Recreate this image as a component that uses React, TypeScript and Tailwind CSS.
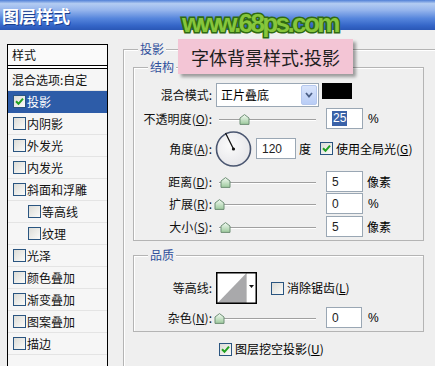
import React from 'react';

const cjk = "font-['Noto_Sans_CJK_SC','Noto_Sans',sans-serif]";

function Check({ checked = false }: { checked?: boolean }) {
  return (
    <span className="flex h-[13px] w-[13px] shrink-0 items-center justify-center border border-[#2a5580] bg-[linear-gradient(135deg,#dcdcd7,#fbfbf9)]">
      {checked && (
        <svg width="9" height="9" viewBox="0 0 9 9">
          <path d="M1 4.2 L3.5 6.8 L8 1.6" fill="none" stroke="#21a121" strokeWidth="2" />
        </svg>
      )}
    </span>
  );
}

function Key({ k }: { k: string }) {
  return (
    <>
      (<span className="underline">{k}</span>)
    </>
  );
}

function Slider({ pos }: { pos: number }) {
  return (
    <div className="relative ml-[2px] h-full w-[106px] shrink-0">
      <div className="absolute left-[5px] right-[4px] top-[50%] h-[2px] border-t border-b border-t-[#a0a0a0] border-b-white" />
      <svg
        className="absolute top-[calc(50%-5px)]"
        style={{ left: pos }}
        width="11"
        height="11"
        viewBox="0 0 11 11"
      >
        <defs>
          <linearGradient id="thumbG" x1="0" y1="0" x2="0" y2="1">
            <stop offset="0" stopColor="#f4fbf4" />
            <stop offset="1" stopColor="#9cc99c" />
          </linearGradient>
        </defs>
        <path d="M1 4 L5.5 0.6 L10 4 L10 10.4 L1 10.4 Z" fill="url(#thumbG)" stroke="#6f8f76" strokeWidth="1" />
      </svg>
    </div>
  );
}

function NumBox({ value, w = 'w-[37px]', selected = false }: { value: string; w?: string; selected?: boolean }) {
  return (
    <div className={`flex h-[21px] ${w} shrink-0 items-center border border-[#9aa7b4] bg-white pl-[5px] font-['Liberation_Sans',sans-serif] text-[12px] text-[#222]`}>
      {selected ? <span className="bg-[#3a62a8] px-[1px] leading-[15px] text-white">{value}</span> : value}
    </div>
  );
}

function Label({ children }: { children: React.ReactNode }) {
  return <div className="w-[78px] shrink-0 text-right text-[12px] leading-none text-[#111]">{children}</div>;
}

function Legend({ children }: { children: React.ReactNode }) {
  return (
    <span className="absolute left-[14px] top-[-9px] bg-[#efefef] px-[2px] text-[12px] leading-[16px] text-[#2f4f9c]">
      {children}
    </span>
  );
}

const listRows: { name: string; sub?: boolean; checked?: boolean; selected?: boolean }[] = [
  { name: '投影', checked: true, selected: true },
  { name: '内阴影' },
  { name: '外发光' },
  { name: '内发光' },
  { name: '斜面和浮雕' },
  { name: '等高线', sub: true },
  { name: '纹理', sub: true },
  { name: '光泽' },
  { name: '颜色叠加' },
  { name: '渐变叠加' },
  { name: '图案叠加' },
  { name: '描边' },
];

export default function App() {
  return (
    <div className={`relative h-[366px] w-[435px] overflow-hidden bg-[#efefef] ${cjk}`}>
      {/* Title bar */}
      <div className="flex h-[30px] items-center bg-[linear-gradient(180deg,#4f7fd6_0%,#b3ccf2_12%,#93b3ec_35%,#5585dc_62%,#3566c8_85%,#2a57b6_100%)] pl-[2px]">
        <span className="text-[17px] font-bold leading-none text-white [text-shadow:1px_1px_0_#1b3f8f]">图层样式</span>
      </div>

      <div className="flex">
        {/* Style list */}
        <div className="ml-[7px] mt-[14px] h-[340px] w-[101px] shrink-0 border border-black bg-[#f6f6f6] text-[12px] text-[#111]">
          <div className="flex h-[20px] items-center bg-[#fafafa] pl-[4px] leading-none">样式</div>
          <div className="h-[4px] border-y border-black bg-white" />
          <div className="flex h-[22px] items-center border-b border-[#e4e4e4] pl-[4px] leading-none">混合选项:自定</div>
          {listRows.map((r) => (
            <div
              key={r.name}
              className={`flex h-[22px] items-center gap-[1px] border-b leading-none ${r.sub ? 'pl-[20px]' : 'pl-[5px]'} ${
                r.selected ? 'border-[#2d5ca8] bg-[#2d5ca8] text-white' : 'border-[#e4e4e4]'
              }`}
            >
              <Check checked={r.checked} />
              <span>{r.name}</span>
            </div>
          ))}
        </div>

        {/* Drop shadow group */}
        <div className="relative ml-[15px] mt-[19px] h-[340px] w-[330px] shrink-0 border-l border-t border-[#b4b4b4] shadow-[inset_1px_1px_0_#fff]">
          <Legend>投影</Legend>

          {/* Structure */}
          <div className="relative ml-[9px] mt-[17px] w-[291px] border border-[#b4b4b4] pb-[3px] pt-[15px] shadow-[inset_1px_1px_0_#fff]">
            <Legend>结构</Legend>

            <div className="flex h-[24px] items-center">
              <Label>混合模式:</Label>
              <div className="ml-[4px] flex h-[24px] w-[103px] shrink-0 items-center border border-[#9aa7b4] bg-white">
                <span className="flex-1 pl-[4px] text-[12px] leading-none">正片叠底</span>
                <span className="mr-[1px] flex h-[20px] w-[16px] items-center justify-center rounded-[2px] border border-[#b6c8ee] bg-[linear-gradient(180deg,#d9e4fb,#b9cdf6)]">
                  <svg width="8" height="6" viewBox="0 0 8 6">
                    <path d="M1 1 L4 4.5 L7 1" fill="none" stroke="#4b5f86" strokeWidth="1.8" />
                  </svg>
                </span>
              </div>
              <div className="ml-[3px] h-[16px] w-[30px] shrink-0 self-start bg-black" />
            </div>

            <div className="mt-[1px] flex h-[21px] items-center">
              <Label>
                不透明度<Key k="O" />:
              </Label>
              <Slider pos={25} />
              <div className="ml-[6px]">
                <NumBox value="25" selected />
              </div>
              <span className="ml-[5px] font-['Liberation_Sans',sans-serif] text-[12px]">%</span>
            </div>

            <div className="mt-[1px] flex h-[37px] items-center">
              <Label>
                角度<Key k="A" />:
              </Label>
              <svg className="ml-[2px] shrink-0" width="38" height="38" viewBox="0 0 38 38">
                <defs>
                  <radialGradient id="dialG" cx="0.4" cy="0.4" r="0.7">
                    <stop offset="0" stopColor="#fbfbfb" />
                    <stop offset="1" stopColor="#e4e4e8" />
                  </radialGradient>
                </defs>
                <circle cx="19.5" cy="19" r="17" fill="url(#dialG)" stroke="#4a5670" strokeWidth="1.6" />
                <line x1="19.5" y1="19" x2="11.5" y2="3" stroke="#111" strokeWidth="1.2" />
                <circle cx="19.5" cy="19" r="1.6" fill="#111" />
              </svg>
              <div className="ml-[4px]">
                <NumBox value="120" w="w-[40px]" />
              </div>
              <span className="ml-[3px] text-[12px] leading-none">度</span>
              <div className="ml-[9px] flex items-center gap-[3px]">
                <Check checked />
                <span className="text-[12px] leading-none">
                  使用全局光<Key k="G" />
                </span>
              </div>
            </div>

            <div className="mt-[4px] flex h-[21px] items-center">
              <Label>
                距离<Key k="D" />:
              </Label>
              <Slider pos={6} />
              <div className="ml-[6px]">
                <NumBox value="5" />
              </div>
              <span className="ml-[4px] text-[12px] leading-none">像素</span>
            </div>

            <div className="mt-[1px] flex h-[21px] items-center">
              <Label>
                扩展<Key k="R" />:
              </Label>
              <Slider pos={0} />
              <div className="ml-[6px]">
                <NumBox value="0" />
              </div>
              <span className="ml-[5px] font-['Liberation_Sans',sans-serif] text-[12px]">%</span>
            </div>

            <div className="mt-[2px] flex h-[21px] items-center">
              <Label>
                大小<Key k="S" />:
              </Label>
              <Slider pos={6} />
              <div className="ml-[6px]">
                <NumBox value="5" />
              </div>
              <span className="ml-[4px] text-[12px] leading-none">像素</span>
            </div>
          </div>

          {/* Quality */}
          <div className="relative ml-[9px] mt-[14px] w-[291px] border border-[#b4b4b4] pb-[3px] pt-[16px] shadow-[inset_1px_1px_0_#fff]">
            <Legend>品质</Legend>

            <div className="flex h-[32px] items-center">
              <Label>等高线:</Label>
              <svg className="ml-[4px] shrink-0" width="41" height="32" viewBox="0 0 41 32">
                <rect x="0" y="0" width="41" height="32" fill="#fff" />
                <path d="M1.5 31 L30 1.5 L30 31 Z" fill="#a9a9ab" />
                <line x1="30.5" y1="1" x2="30.5" y2="31" stroke="#c8c8c8" />
                <path d="M33 13 L38 13 L35.5 16 Z" fill="#111" />
                <rect x="0.75" y="0.75" width="39.5" height="30.5" fill="none" stroke="#000" strokeWidth="1.5" />
              </svg>
              <div className="ml-[14px] flex items-center gap-[3px]">
                <Check />
                <span className="text-[12px] leading-none">
                  消除锯齿<Key k="L" />
                </span>
              </div>
            </div>

            <div className="mt-[3px] flex h-[21px] items-center">
              <Label>
                杂色<Key k="N" />:
              </Label>
              <Slider pos={0} />
              <div className="ml-[6px]">
                <NumBox value="0" w="w-[36px]" />
              </div>
              <span className="ml-[6px] font-['Liberation_Sans',sans-serif] text-[12px]">%</span>
            </div>
          </div>

          <div className="mt-[9px] flex h-[16px] items-center gap-[3px] pl-[95px]">
            <Check checked />
            <span className="text-[12px] leading-none">
              图层挖空投影<Key k="U" />
            </span>
          </div>
        </div>
      </div>

      {/* Watermark */}
      <div className="absolute left-[182px] top-[10px] font-['Liberation_Sans',sans-serif] text-[26px] font-bold leading-none tracking-[-2.6px] text-[#86c63c] [-webkit-text-stroke:3px_#2f6a12] [paint-order:stroke_fill]">
        www.68ps.com
      </div>

      {/* Caption label */}
      <div className="absolute left-[178px] top-[39px] flex h-[35px] w-[175px] items-center justify-center bg-[#f3c5d5] text-[18px] leading-none text-[#1e1e1e] shadow-[3px_3px_3px_rgba(0,0,0,0.35)]">
        字体背景样式:投影
      </div>
    </div>
  );
}
